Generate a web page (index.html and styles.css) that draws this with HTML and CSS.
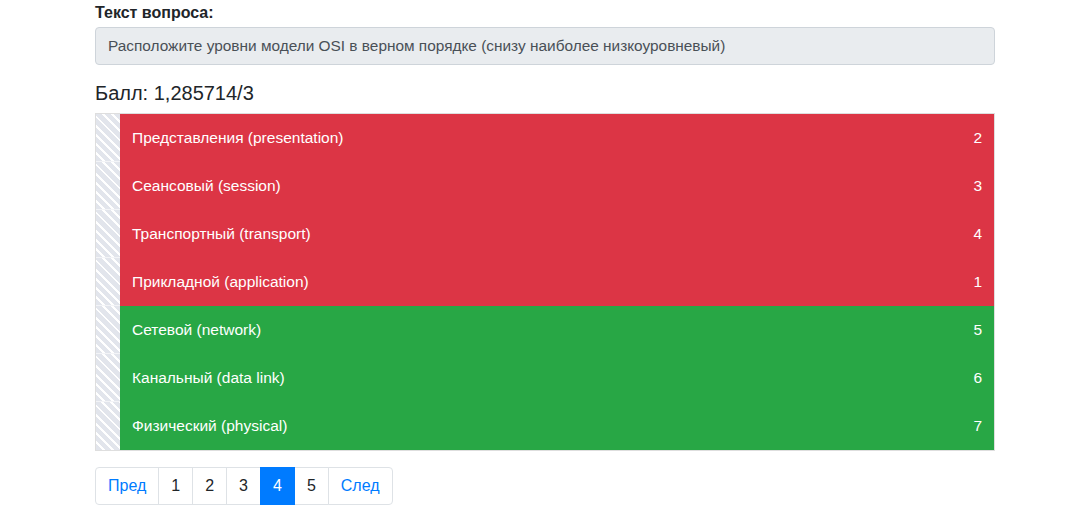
FILE: index.html
```html
<!DOCTYPE html>
<html lang="ru">
<head>
<meta charset="utf-8">
<link rel="stylesheet" href="styles.css">
</head>
<body>
<div class="container">
  <label class="q-label">Текст вопроса:</label>
  <div class="q-box">Расположите уровни модели OSI в верном порядке (снизу наиболее низкоуровневый)</div>
  <h5 class="score">Балл: 1,285714/3</h5>
  <ul class="answers">
    <li class="row bad"><span class="handle"></span><span class="txt">Представления (presentation)</span><span class="num">2</span></li>
    <li class="row bad"><span class="handle"></span><span class="txt">Сеансовый (session)</span><span class="num">3</span></li>
    <li class="row bad"><span class="handle"></span><span class="txt">Транспортный (transport)</span><span class="num">4</span></li>
    <li class="row bad"><span class="handle"></span><span class="txt">Прикладной (application)</span><span class="num">1</span></li>
    <li class="row good"><span class="handle"></span><span class="txt">Сетевой (network)</span><span class="num">5</span></li>
    <li class="row good"><span class="handle"></span><span class="txt">Канальный (data link)</span><span class="num">6</span></li>
    <li class="row good"><span class="handle"></span><span class="txt">Физический (physical)</span><span class="num">7</span></li>
  </ul>
  <ul class="pagination">
    <li class="page link">Пред</li>
    <li class="page">1</li>
    <li class="page">2</li>
    <li class="page">3</li>
    <li class="page active">4</li>
    <li class="page">5</li>
    <li class="page link">След</li>
  </ul>
</div>
</body>
</html>
```
FILE: styles.css
```css
* { box-sizing: border-box; }
html, body { margin: 0; padding: 0; background: #fff; }
body {
  font-family: "Liberation Sans", Arial, sans-serif;
  font-size: 16px;
  line-height: 1.5;
  color: #212529;
}
.container {
  width: 900px;
  margin-left: 95px;
  padding-top: 1px;
}
.q-label {
  display: block;
  font-weight: bold;
  margin-bottom: 2px;
}
.q-box {
  height: 38px;
  padding: 6px 12px;
  background: #e9ecef;
  border: 1px solid #ced4da;
  border-radius: 4px;
  color: #495057;
  font-size: 15.4px;
  line-height: 24px;
}
.score {
  margin: 16px 0 8px;
  font-size: 20px;
  font-weight: normal;
  line-height: 24px;
}
.answers {
  list-style: none;
  margin: 0;
  padding: 0;
  border: 1px solid rgba(0,0,0,.13);
}
.row {
  display: flex;
  align-items: stretch;
  height: 48px;
  color: #fff;
  font-size: 15.5px;
}
.row.bad { background: #dc3545; }
.row.good { background: #28a745; }
.handle {
  width: 24px;
  flex: none;
  background: repeating-linear-gradient(45deg, #e2e5ec 0 4.5px, #ffffff 4.5px 6.5px);
  border-bottom: 1px solid #f3f4f7;
}
.row:last-child .handle { border-bottom: none; }
.txt {
  flex: 1;
  padding: 12px 12px;
  line-height: 24px;
}
.num {
  padding: 12px 12px 12px 0;
  line-height: 24px;
}
.pagination {
  list-style: none;
  display: flex;
  margin: 16px 0 0;
  padding: 0;
  font-size: 16px;
}
.page {
  padding: 8px 12px;
  line-height: 20px;
  border: 1px solid #dee2e6;
  margin-left: -1px;
  color: #212529;
  background: #fff;
}
.page:first-child {
  margin-left: 0;
  border-radius: 4px 0 0 4px;
}
.page:last-child { border-radius: 0 4px 4px 0; }
.page.link { color: #007bff; }
.page.active {
  background: #007bff;
  border-color: #007bff;
  color: #fff;
  position: relative;
}
```
